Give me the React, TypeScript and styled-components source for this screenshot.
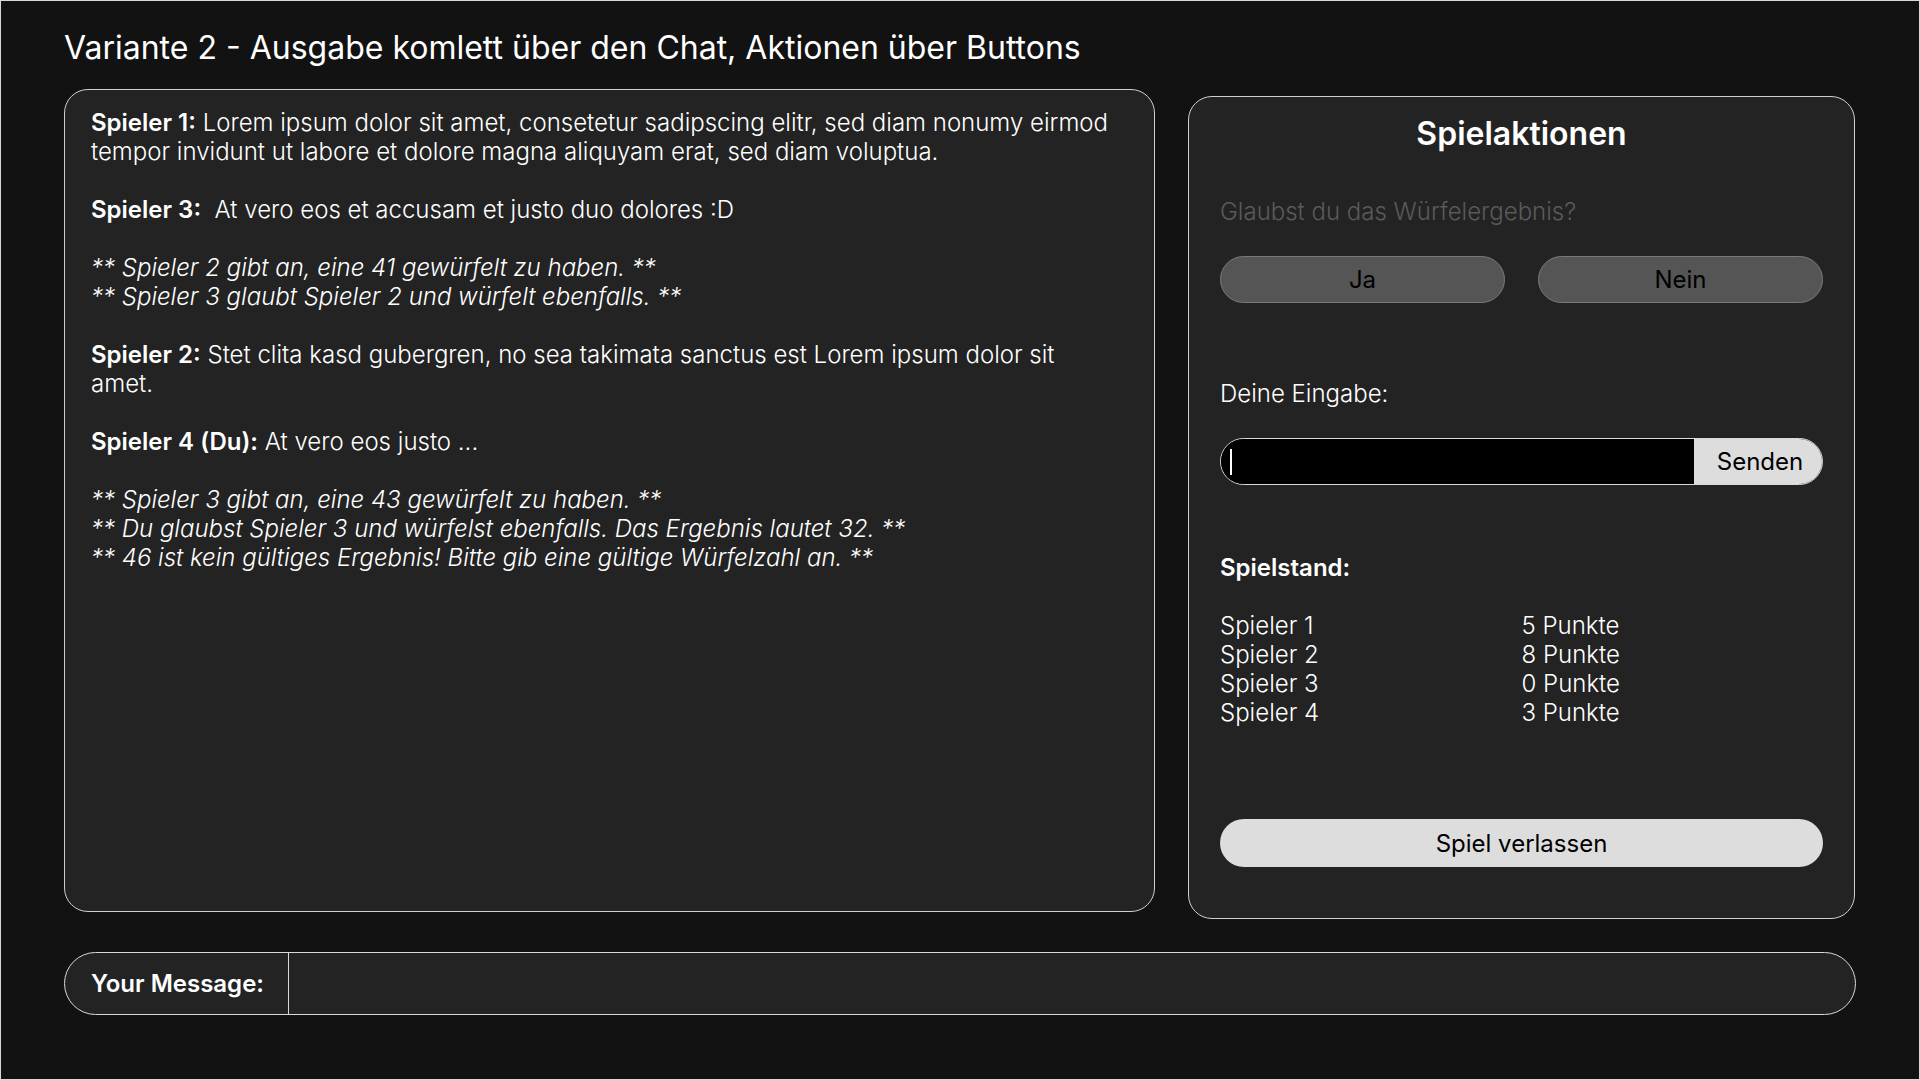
import React from "react";
import styled, { createGlobalStyle } from "styled-components";

const GlobalStyle = createGlobalStyle`
  html, body {
    margin: 0;
    padding: 0;
    background: #121212;
  }
  body {
    font-family: Inter, "Noto Sans", sans-serif;
    color: #ffffff;
  }
`;

const Frame = styled.div`
  box-sizing: border-box;
  width: 1920px;
  height: 1080px;
  border: 1px solid #d9d9d9;
  background: #121212;
  padding: 27px 63px 0 63px;
`;

const Title = styled.h1`
  margin: 0;
  font-size: 32px;
  line-height: 39px;
  font-weight: 400;
  color: #ffffff;
`;

const Main = styled.div`
  display: flex;
  align-items: flex-start;
  gap: 33px;
  margin-top: 22px;
`;

const Panel = styled.section`
  box-sizing: border-box;
  height: 823px;
  background: #232323;
  border: 1px solid #cfcfcf;
  border-radius: 24px;
`;

const ChatPanel = styled(Panel)`
  width: 1091px;
  padding: 18px 40px 18px 26px;
`;

const ChatLine = styled.p<{ $italic?: boolean }>`
  margin: 0;
  font-size: 24px;
  line-height: 29px;
  font-weight: 300;
  font-style: ${(p) => (p.$italic ? "italic" : "normal")};
  white-space: pre-wrap;
`;

const Spacer = styled.div`
  height: 29px;
`;

const Speaker = styled.b`
  font-weight: 600;
`;

const ActionPanel = styled(Panel)`
  width: 667px;
  margin-top: 7px;
  padding: 17px 31px 51px 31px;
  display: flex;
  flex-direction: column;
`;

const PanelTitle = styled.h2`
  margin: 0;
  text-align: center;
  font-size: 32px;
  line-height: 39px;
  font-weight: 600;
`;

const Label = styled.p<{ $muted?: boolean; $bold?: boolean; $gap: number }>`
  margin: ${(p) => p.$gap}px 0 0 0;
  font-size: 24px;
  line-height: 29px;
  font-weight: ${(p) => (p.$bold ? 600 : 300)};
  color: ${(p) => (p.$muted ? "#5a5a5a" : "#ffffff")};
`;

const ChoiceRow = styled.div`
  display: grid;
  grid-template-columns: 1fr 1fr;
  gap: 33px;
  margin-top: 30px;
`;

const ChoiceButton = styled.button`
  height: 47px;
  border-radius: 24px;
  border: 1px solid #7a7a7a;
  background: #555555;
  color: #000000;
  font-family: Inter, sans-serif;
  font-size: 24px;
  font-weight: 400;
  padding: 0;
`;

const InputRow = styled.div`
  display: flex;
  height: 47px;
  margin-top: 30px;
  border: 1px solid #d9d9d9;
  border-radius: 24px;
  overflow: hidden;
  box-sizing: border-box;
`;

const InputField = styled.div`
  flex: 1;
  background: #000000;
  display: flex;
  align-items: center;
  padding-left: 9px;
`;

const Caret = styled.span`
  width: 2px;
  height: 26px;
  background: #ffffff;
`;

const SendButton = styled.button`
  width: 128px;
  border: none;
  background: #dddddd;
  color: #000000;
  font-family: Inter, sans-serif;
  font-size: 24px;
  font-weight: 400;
  padding: 0 0 0 4px;
`;

const ScoreGrid = styled.div`
  display: grid;
  grid-template-columns: 1fr 1fr;
  margin-top: 29px;
  font-size: 24px;
  line-height: 29px;
  font-weight: 300;
`;

const LeaveButton = styled.button`
  margin-top: auto;
  height: 48px;
  border: none;
  border-radius: 24px;
  background: #dddddd;
  color: #000000;
  font-family: Inter, sans-serif;
  font-size: 24px;
  font-weight: 400;
`;

const MessageBar = styled.div`
  box-sizing: border-box;
  display: flex;
  margin-top: 33px;
  width: 1792px;
  height: 63px;
  background: #232323;
  border: 1px solid #d9d9d9;
  border-radius: 32px;
  overflow: hidden;
`;

const MessageLabel = styled.div`
  display: flex;
  align-items: center;
  width: 224px;
  padding-left: 26px;
  box-sizing: border-box;
  border-right: 1px solid #d9d9d9;
  font-size: 24px;
  font-weight: 600;
`;

const MessageInput = styled.div`
  flex: 1;
`;

const scores = [
  ["Spieler 1", "5 Punkte"],
  ["Spieler 2", "8 Punkte"],
  ["Spieler 3", "0 Punkte"],
  ["Spieler 4", "3 Punkte"],
];

export default function App() {
  return (
    <>
      <GlobalStyle />
      <Frame>
        <Title>Variante 2 - Ausgabe komlett über den Chat, Aktionen über Buttons</Title>
        <Main>
          <ChatPanel>
            <ChatLine>
              <Speaker>Spieler 1:</Speaker> Lorem ipsum dolor sit amet, consetetur sadipscing elitr, sed diam nonumy eirmod tempor invidunt ut labore et dolore magna aliquyam erat, sed diam voluptua.
            </ChatLine>
            <Spacer />
            <ChatLine>
              <Speaker>Spieler 3:</Speaker>{"  "}At vero eos et accusam et justo duo dolores :D
            </ChatLine>
            <Spacer />
            <ChatLine $italic>** Spieler 2 gibt an, eine 41 gewürfelt zu haben. **</ChatLine>
            <ChatLine $italic>** Spieler 3 glaubt Spieler 2 und würfelt ebenfalls. **</ChatLine>
            <Spacer />
            <ChatLine>
              <Speaker>Spieler 2:</Speaker> Stet clita kasd gubergren, no sea takimata sanctus est Lorem ipsum dolor sit amet.
            </ChatLine>
            <Spacer />
            <ChatLine>
              <Speaker>Spieler 4 (Du):</Speaker> At vero eos justo ...
            </ChatLine>
            <Spacer />
            <ChatLine $italic>** Spieler 3 gibt an, eine 43 gewürfelt zu haben. **</ChatLine>
            <ChatLine $italic>** Du glaubst Spieler 3 und würfelst ebenfalls. Das Ergebnis lautet 32. **</ChatLine>
            <ChatLine $italic>** 46 ist kein gültiges Ergebnis! Bitte gib eine gültige Würfelzahl an. **</ChatLine>
          </ChatPanel>

          <ActionPanel>
            <PanelTitle>Spielaktionen</PanelTitle>
            <Label $muted $gap={44}>Glaubst du das Würfelergebnis?</Label>
            <ChoiceRow>
              <ChoiceButton>Ja</ChoiceButton>
              <ChoiceButton>Nein</ChoiceButton>
            </ChoiceRow>
            <Label $gap={76}>Deine Eingabe:</Label>
            <InputRow>
              <InputField>
                <Caret />
              </InputField>
              <SendButton>Senden</SendButton>
            </InputRow>
            <Label $bold $gap={68}>Spielstand:</Label>
            <ScoreGrid>
              {scores.map(([name, points]) => (
                <React.Fragment key={name}>
                  <span>{name}</span>
                  <span>{points}</span>
                </React.Fragment>
              ))}
            </ScoreGrid>
            <LeaveButton>Spiel verlassen</LeaveButton>
          </ActionPanel>
        </Main>

        <MessageBar>
          <MessageLabel>Your Message:</MessageLabel>
          <MessageInput />
        </MessageBar>
      </Frame>
    </>
  );
}
